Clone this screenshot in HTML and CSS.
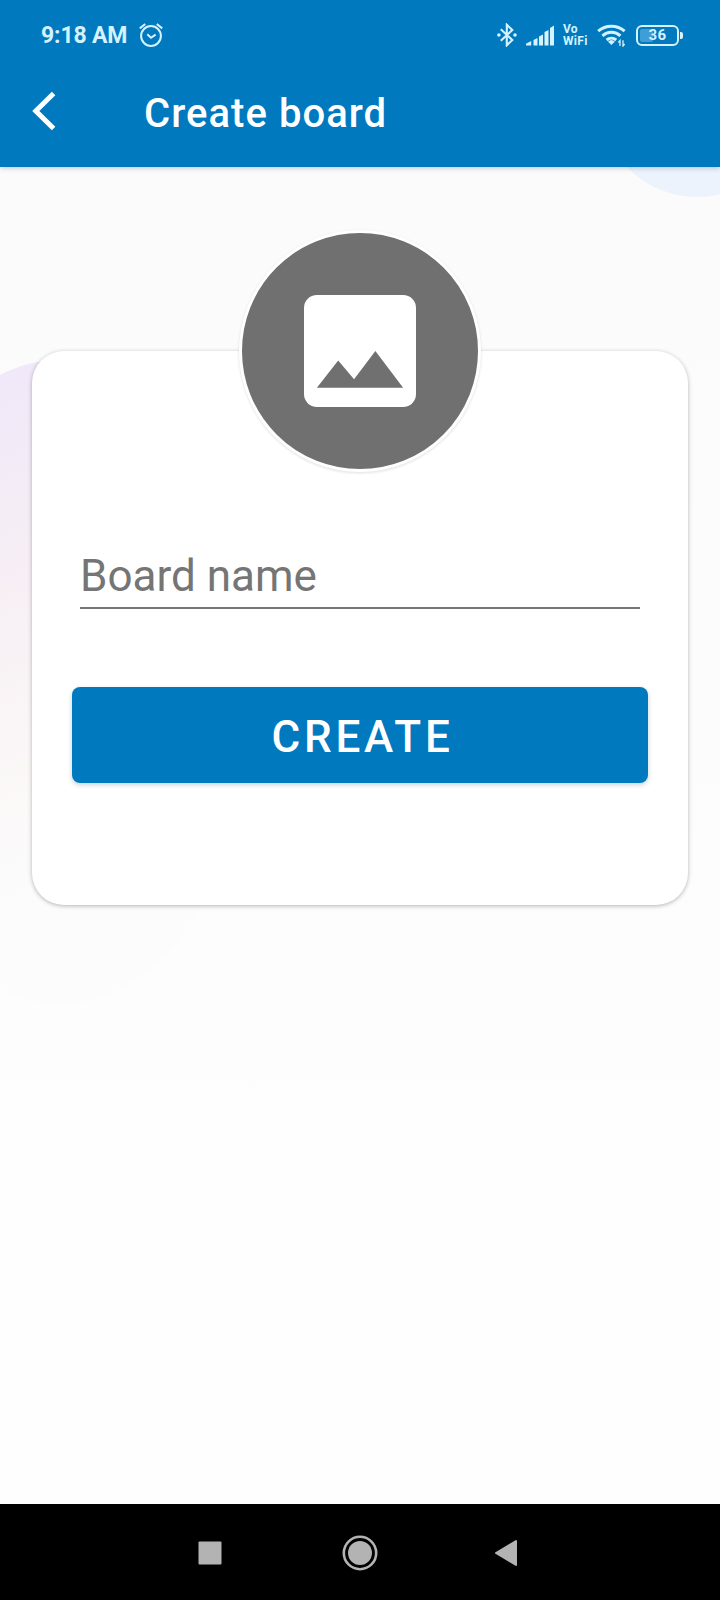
FILE: index.html
```html
<!DOCTYPE html>
<html lang="en">
<head>
<meta charset="utf-8">
<title>Create board</title>
<link rel="stylesheet" href="styles.css">
</head>
<body>
<div class="screen">
  <header class="app-header">
    <div class="status-bar">
      <span class="clock">9:18 AM</span>
      <svg class="alarm" width="24" height="24" viewBox="0 0 24 24" fill="none" stroke="currentColor" stroke-width="2">
        <circle cx="12" cy="13" r="9.9"/>
        <path d="M.8 5.4 6.2 1M23.2 5.4 17.8 1"/>
        <path d="M8.3 11.2 12 14.8l4.6-3.2"/>
      </svg>
      <div class="status-icons">
        <svg class="bluetooth" width="20" height="24" viewBox="0 0 20 24" fill="none" stroke="currentColor" stroke-width="2.1">
          <path d="m3.8 6.2 11.500 10.800-5.500 5.300V1.700l5.500 5.300-11.500 10.800"/>
          <circle cx="1.9" cy="12" r="1.8" fill="currentColor" stroke="none"/>
          <circle cx="18" cy="12" r="1.8" fill="currentColor" stroke="none"/>
        </svg>
        <svg class="signal" width="28" height="21" viewBox="0 0 28 21" fill="currentColor">
          <path d="M0 20.5v-1.7l5.200-2.800v4.500zM7.500 15l4-2v7.500h-4zM13 11.500l4-2v11h-4zM18.500 7l4-2v15.500h-4zM24 3l4-2.500v20h-4z"/>
        </svg>
        <div class="vowifi"><span>Vo</span><span>WiFi</span></div>
        <svg class="wifi" width="30" height="24" viewBox="0 0 30 24" fill="none" stroke="currentColor" stroke-width="3">
          <path d="M1.2 8.2a20 20 0 0 1 26.4 0M5.4 12.8a13.5 13.5 0 0 1 18 0M9.6 17a7.5 7.5 0 0 1 9.6 0"/>
          <path d="M11 18.7a5 5 0 0 1 6.8 0L14.4 22z" fill="currentColor" stroke="none"/>
          <path d="M23 23v-5.5l-1.6 2M26 17.3V23l1.6-2" stroke-width="1.3"/>
        </svg>
        <div class="battery"><span class="battery-level"></span><span class="battery-text">36</span></div>
      </div>
    </div>
    <div class="toolbar">
      <svg class="back" width="24" height="40" viewBox="0 0 24 40" fill="none" stroke="currentColor" stroke-width="5">
        <path d="M21.600 2.500 3.800 20l17.800 17.500"/>
      </svg>
      <h1 class="title">Create board</h1>
    </div>
  </header>
  <main class="content">
    <svg class="backdrop" width="720" height="1337" viewBox="0 0 720 1337">
      <defs>
        <linearGradient id="lilac" x1="0" y1="0" x2="0.25" y2="1">
          <stop offset="0" stop-color="#efe6fa"/>
          <stop offset=".2" stop-color="#f2eaf7"/>
          <stop offset=".42" stop-color="#f7eff4"/>
          <stop offset=".72" stop-color="#fbf8f8"/>
          <stop offset=".9" stop-color="#fcfcfc"/>
        </linearGradient>
      </defs>
      <circle cx="697" cy="-67" r="97" fill="#edf3fc"/>
      <ellipse cx="60" cy="515" rx="200" ry="322" fill="url(#lilac)"/>
    </svg>
    <section class="card">
      <div class="avatar">
        <svg width="112" height="112" viewBox="0 0 113 113">
          <rect width="113" height="113" rx="13" fill="#fff"/>
          <path d="M13 93.5 34.5 66 50.500 85 72 56.500 100 93.500z" fill="#707070"/>
        </svg>
      </div>
      <div class="field">Board name</div>
      <button class="create" type="button">CREATE</button>
    </section>
  </main>
  <nav class="nav-bar">
    <svg width="24" height="24" viewBox="0 0 24 24"><rect x=".5" y=".5" width="23" height="23" rx="1" fill="#b3b3b3"/></svg>
    <svg class="home" width="36" height="36" viewBox="0 0 36 36"><circle cx="18" cy="18" r="16.200" fill="none" stroke="#b3b3b3" stroke-width="2.600"/><circle cx="18" cy="18" r="12" fill="#b3b3b3"/></svg>
    <svg width="24" height="28" viewBox="0 0 24 28"><path d="M22 2v24L2 14z" fill="#b3b3b3" stroke="#b3b3b3" stroke-width="2" stroke-linejoin="round"/></svg>
  </nav>
</div>
</body>
</html>
```
FILE: styles.css
```css
* { box-sizing: border-box; }
body { margin: 0; font-family: Roboto, sans-serif; }
svg { display: block; flex: none; }
.screen { width: 720px; height: 1600px; display: flex; flex-direction: column; overflow: hidden; }
.app-header { height: 167px; flex: none; background: #0079bf; color: #fff; position: relative; z-index: 1; box-shadow: 0 1px 5px rgba(0, 40, 70, .25); }
.status-bar { height: 70px; padding: 0 37px 0 41px; display: flex; align-items: center; color: #d5f2ff; }
.clock { font-size: 23px; line-height: 28px; font-weight: 700; letter-spacing: -.15px; width: 98px; padding-top: 2px; white-space: nowrap; }
.status-icons { margin-left: auto; display: flex; align-items: center; }
.signal { margin-left: 9px; }
.vowifi { margin-left: 9px; width: 26px; display: flex; flex-direction: column; font-size: 12px; line-height: 12px; font-weight: 700; letter-spacing: .3px; }
.wifi { margin-left: 8px; }
.battery { position: relative; margin-left: 9px; margin-right: 4px; width: 43px; height: 21px; padding: 2px; border: 2.500px solid currentColor; border-radius: 6px; display: flex; }
.battery::after { content: ""; position: absolute; right: -6px; top: 5px; width: 3px; height: 7px; background: currentColor; border-radius: 0 2px 2px 0; }
.battery-level { width: 36%; background: #3f9ed6; border-radius: 2px; }
.battery-text { position: absolute; inset: 0; text-align: center; font-size: 15px; line-height: 17px; font-weight: 700; letter-spacing: .4px; }
.toolbar { height: 82px; padding-left: 32px; display: flex; align-items: center; }
.title { margin: 6px 0 0 88px; font-size: 40px; line-height: 48px; font-weight: 500; letter-spacing: 1.05px; }
.content { height: 1337px; flex: none; padding: 184px 32px 0; position: relative; background: linear-gradient(#fbfbfb, #fcfcfc 45%, #fefefe 75%); }
.backdrop { position: absolute; left: 0; top: 0; }
.card { position: relative; height: 554px; padding: 0 40px; border-radius: 32px; background: #fff; box-shadow: 0 1px 4px rgba(0, 0, 0, .29); display: flex; flex-direction: column; }
.avatar { width: 242px; height: 242px; margin: -121px auto 0; flex: none; border: 3px solid #fff; border-radius: 50%; background: #707070; box-shadow: 0 1px 3px rgba(0, 0, 0, .13); display: flex; align-items: center; justify-content: center; }
.field { height: 70px; margin: 67px 8px 0; padding-top: 11px; border-bottom: 2px solid #757575; color: #757575; font-size: 44px; line-height: 52px; }
.create { height: 96px; margin-top: 78px; padding: 4px 0 0 5px; border: 0; border-radius: 8px; background: #0079bf; color: #fff; font: 500 44px/92px Roboto, sans-serif; letter-spacing: 3.800px; box-shadow: 0 2px 5px rgba(0, 60, 100, .22); }
.nav-bar { height: 96px; flex: none; background: #000; display: flex; align-items: center; justify-content: space-between; padding: 1px 202px 0 198px; }
.home { margin-left: 3px; }
```
